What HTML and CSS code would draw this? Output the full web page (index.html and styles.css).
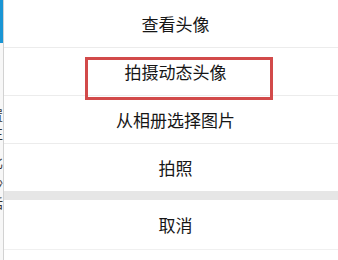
FILE: index.html
```html
<!DOCTYPE html>
<html lang="zh-CN">
<head>
<meta charset="utf-8">
<link rel="stylesheet" href="styles.css">
</head>
<body>
<div class="screen">
  <div class="edge">
    <div class="edge-bar"></div>
    <div class="edge-text t1">置</div>
    <div class="edge-text t2">正</div>
    <div class="edge-text t3">比</div>
    <div class="edge-text t4">沙</div>
    <div class="edge-text t5">话</div>
  </div>
  <div class="sheet">
    <div class="item">查看头像</div>
    <div class="item">拍摄动态头像</div>
    <div class="item">从相册选择图片</div>
    <div class="item last">拍照</div>
    <div class="gap"></div>
    <div class="item cancel">取消</div>
  </div>
</div>
<div class="mark"></div>
</body>
</html>
```
FILE: styles.css
```css
html, body {
  margin: 0;
  padding: 0;
  width: 338px;
  height: 260px;
  overflow: hidden;
  background: #ffffff;
  font-family: "Noto Sans CJK SC", "Noto Sans", sans-serif;
}
.screen {
  display: flex;
  height: 260px;
}
.edge {
  position: relative;
  width: 3px;
  flex-shrink: 0;
  border-right: 1px solid #d2d2d2;
  background: #f7f7f7;
  overflow: hidden;
}
.edge-bar {
  height: 43px;
  background: #1a95d4;
}
.edge-text {
  position: absolute;
  right: 0;
  font-size: 13px;
  line-height: 13px;
  color: #333;
  width: 13px;
}
.t1 { top: 108px; }
.t2 { top: 127px; }
.t3 { top: 155px; }
.t4 { top: 176px; }
.t5 { top: 196px; }
.sheet {
  width: 343px;
  flex-shrink: 0;
  display: flex;
  flex-direction: column;
  background: #ffffff;
}
.item {
  height: 47px;
  border-bottom: 1px solid #ececec;
  display: flex;
  align-items: center;
  justify-content: center;
  font-size: 17px;
  color: #161616;
  background: #ffffff;
}
.item.last {
  border-bottom: none;
}
.gap {
  height: 9px;
  background: #e6e6e6;
}
.item.cancel {
  height: 49px;
  border-bottom: 1px solid #f0f0f0;
}
.mark {
  position: absolute;
  left: 85px;
  top: 57px;
  width: 182px;
  height: 37px;
  border: 3px solid #d24a4a;
}
```
